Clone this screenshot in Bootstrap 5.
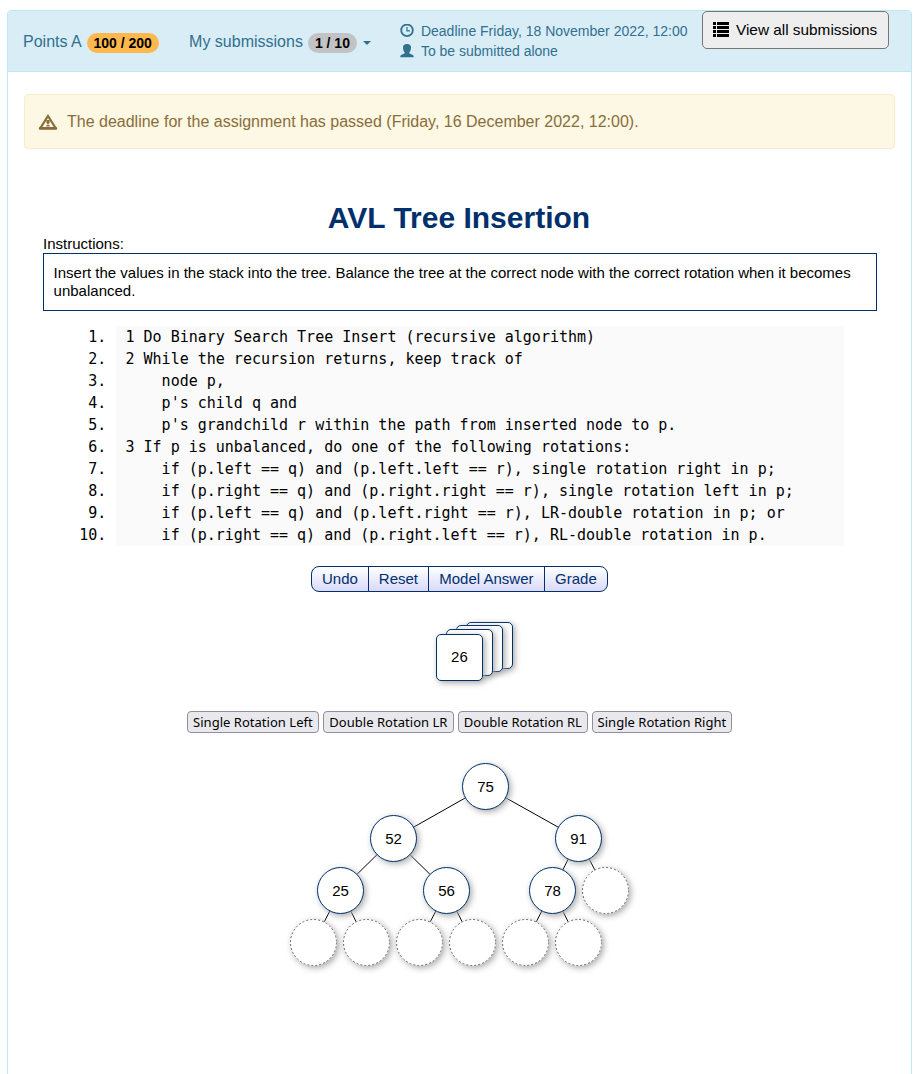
<!DOCTYPE html>
<html lang="en">
<head>
<meta charset="utf-8">
<meta name="viewport" content="width=device-width, initial-scale=1">
<title>AVL Tree Insertion</title>
<link href="https://cdn.jsdelivr.net/npm/bootstrap@5.3.0/dist/css/bootstrap.min.css" rel="stylesheet">
<style>
body { font-family: "Liberation Sans", Arial, sans-serif; font-size: 16px; line-height: 22px; color: #000; overflow: hidden; }
.panel { margin: 10px 7px 0; width: 905px; height: 1100px; border: 1px solid #bce8f1; border-radius: 4px; }
.panel-top { height: 61px; padding: 0 15px; background: #d9edf7; border-bottom: 1px solid #bce8f1; color: #31708f; border-radius: 3px 3px 0 0; }
.pill { flex: none; font-size: 14px; font-weight: 700; line-height: 20px; height: 20px; color: #000; border-radius: 10px; text-align: center; white-space: nowrap; margin: 2px 0 0 5px; }
.pill-points { background: #ffb84d; width: 72px; }
.pill-count { background: #c3c3c5; width: 49px; }
.stat { margin-top: 20px; height: 22px; }
.stat + .stat { margin-left: 30.4px; }
.drop { width: 0; border: 4px solid transparent; border-top-color: #31708f; border-bottom: 0; margin: 2px 0 0 6px; }
.meta { font-size: 14px; line-height: 20px; margin: 10px 0 0 29px; }
.meta svg { width: 14px; height: 14px; margin-right: 7px; }
.view-btn { width: 187px; height: 38px; margin-left: auto; margin-right: 7px; border: 1px solid #767676; border-radius: 5px; background: #eee; font-size: 15.35px; line-height: 36px; color: #000; padding: 0 0 0 10px; }
.view-btn svg { margin: -2px 7px 0 0; }
.notice { margin: 22px 16px 0; height: 55px; border: 1px solid #faebcc; border-radius: 4px; background: #fcf8e3; color: #8a6d3b; padding: 0 14px; }
.notice svg { margin: 0 9px 0 -1px; }
.exercise { margin: 52px 34px 0 35px; font-size: 15px; line-height: 18px; }
.exercise h1 { font-size: 30px; line-height: 34px; font-weight: 700; color: #00306c; margin: 0 2px 0 0; }
.brief { border: 1px solid #00306c; height: 58px; padding: 10px 10px 0 9.6px; }
.code { margin: 15px 33px 0 36px; font: 15px/22px "DejaVu Sans Mono", monospace; }
.code li { display: flex; height: 22px; }
.code .num { width: 27.4px; text-align: right; margin-right: 9.6px; white-space: pre; }
.code .txt { flex: 1; background: #fafafa; white-space: pre; padding-left: 9.5px; }
.applet { margin-right: 2px; }
.tools { margin: 20px auto 0; width: 297px; height: 26px; border: 1px solid #00306c; border-radius: 8px; overflow: hidden; background: linear-gradient(#fff, #d9d9fc); }
.tools button { border: 0; border-right: 1px solid #00306c; background: none; color: #00306c; padding: 0 0 0 .8px; line-height: 24px; height: 24px; }
.tools button:last-child { border-right: 0; }
.w-undo { width: 57px; } .w-reset { width: 60px; } .w-model { width: 116px; } .w-grade { width: 62px; }
.stack { position: relative; width: 47px; height: 59px; margin: 30px auto 0; }
.tile { position: absolute; width: 47px; height: 47px; border: 1px solid #00306c; border-radius: 5px; background: #fff; text-align: center; line-height: 44px; padding-left: .8px; box-shadow: 2px 2px 6px #aaa; }
.rot { margin-top: 30px; gap: 4px; }
.rot button { height: 22px; border: 1px solid #8f8f9d; border-radius: 4px; background: #e9e9ed; font: 13px/20px "Noto Sans", sans-serif; letter-spacing: .03px; color: #000; padding: 0 0 0 .8px; white-space: nowrap; text-align: center; }
.tree { position: relative; width: 340px; height: 204px; margin: 30px auto 0; left: 1px; }
.tree svg { position: absolute; left: 0; top: 0; }
.node { position: absolute; width: 47px; height: 47px; border: 1px solid #00306c; border-radius: 50%; background: #fff; text-align: center; line-height: 45px; box-shadow: 2px 2px 6px #aaa; }
.node.vacant { border-color: transparent; }
</style>
</head>
<body>
<main class="panel">
  <header class="panel-top d-flex align-items-start">
    <div class="stat d-flex">Points A <span class="pill pill-points">100 / 200</span></div>
    <div class="stat d-flex">My submissions <span class="pill pill-count">1 / 10</span><span class="align-self-center"><span class="drop d-block"></span></span></div>
    <div class="meta">
      <div class="d-flex align-items-center"><svg viewBox="0 0 14 14" fill="none" stroke="#31708f"><circle cx="7" cy="6.3" r="5.8" stroke-width="1.8"/><path d="M7 3V6.8H10" stroke-width="1.2"/></svg>Deadline Friday, 18 November 2022, 12:00</div>
      <div class="d-flex align-items-center"><svg viewBox="0 0 14 14" fill="#31708f"><path d="M7 0C9.8 0 11 1.4 11 3.6C11 5.8 10.4 7.3 9.3 8.4V9.3C10 10.2 13.7 10.6 13.7 12.4V13.2H.3V12.4C.3 10.6 4 10.2 4.7 9.3V8.4C3.6 7.3 3 5.8 3 3.6C3 1.4 4.2 0 7 0Z"/></svg>To be submitted alone</div>
    </div>
    <button class="view-btn d-flex align-items-center" type="button"><svg class="flex-shrink-0" width="16" height="15" viewBox="0 0 16 15"><path d="M0 0h3v3H0zM0 4h3v3H0zM0 8h3v3H0zM0 12h3v3H0zM4 0h12v3H4zM4 4h12v3H4zM4 8h12v3H4zM4 12h12v3H4z"/></svg>View all submissions</button>
  </header>
  <div class="notice d-flex align-items-center">
    <svg width="20" height="16" viewBox="0 0 20 16"><path d="M10 2 17.5 14H2.5Z" fill="none" stroke="#8a6d3b" stroke-width="2.2"/><path d="M1.2 13h17.6v2.8H1.2z" fill="#8a6d3b"/><path d="M8.4 6h3.2v2.3l-.8 2H9.2l-.8-2zM8.5 11h3v1.6h-3z" fill="#8a6d3b"/></svg>
    The deadline for the assignment has passed (Friday, 16 December 2022, 12:00).
  </div>
  <section class="exercise">
    <h1 class="text-center">AVL Tree Insertion</h1>
    <div>Instructions:</div>
    <div class="brief">Insert the values in the stack into the tree. Balance the tree at the correct node with the correct rotation when it becomes unbalanced.</div>
    <ol class="code list-unstyled mb-0">
      <li><span class="num">1.</span><span class="txt">1 Do Binary Search Tree Insert (recursive algorithm)</span></li>
      <li><span class="num">2.</span><span class="txt">2 While the recursion returns, keep track of</span></li>
      <li><span class="num">3.</span><span class="txt">    node p,</span></li>
      <li><span class="num">4.</span><span class="txt">    p's child q and</span></li>
      <li><span class="num">5.</span><span class="txt">    p's grandchild r within the path from inserted node to p.</span></li>
      <li><span class="num">6.</span><span class="txt">3 If p is unbalanced, do one of the following rotations:</span></li>
      <li><span class="num">7.</span><span class="txt">    if (p.left == q) and (p.left.left == r), single rotation right in p;</span></li>
      <li><span class="num">8.</span><span class="txt">    if (p.right == q) and (p.right.right == r), single rotation left in p;</span></li>
      <li><span class="num">9.</span><span class="txt">    if (p.left == q) and (p.left.right == r), LR-double rotation in p; or</span></li>
      <li><span class="num">10.</span><span class="txt">    if (p.right == q) and (p.right.left == r), RL-double rotation in p.</span></li>
    </ol>
    <div class="applet">
      <div class="tools d-flex"><button class="w-undo">Undo</button><button class="w-reset">Reset</button><button class="w-model">Model Answer</button><button class="w-grade">Grade</button></div>
      <div class="stack">
        <div class="tile" style="left:30px;top:0"></div>
        <div class="tile" style="left:20px;top:3px"></div>
        <div class="tile" style="left:10px;top:7px"></div>
        <div class="tile" style="left:0;top:12px">26</div>
      </div>
      <div class="rot d-flex justify-content-center">
        <button style="width:132px">Single Rotation Left</button>
        <button style="width:131px">Double Rotation LR</button>
        <button style="width:130px">Double Rotation RL</button>
        <button style="width:140px">Single Rotation Right</button>
      </div>
      <div class="tree">
        <svg width="340" height="204" stroke="#000" stroke-width="1"><path d="M195.5 23.5 103.5 75.5M195.5 23.5 288.5 75.5M103.5 75.5 50.5 127.5M103.5 75.5 156.5 127.5M288.5 75.5 262.5 127.5M288.5 75.5 315.5 127.5M50.5 127.5 23.5 179.5M50.5 127.5 76.5 179.5M156.5 127.5 129.5 179.5M156.5 127.5 182.5 179.5M262.5 127.5 235.5 179.5M262.5 127.5 288.5 179.5"/></svg>
        <div class="node" style="left:172px;top:0">75</div>
        <div class="node" style="left:80px;top:52px">52</div>
        <div class="node" style="left:265px;top:52px">91</div>
        <div class="node" style="left:27px;top:104px">25</div>
        <div class="node" style="left:133px;top:104px">56</div>
        <div class="node" style="left:239px;top:104px">78</div>
        <div class="node vacant" style="left:292px;top:104px"></div>
        <div class="node vacant" style="left:0;top:156px"></div>
        <div class="node vacant" style="left:53px;top:156px"></div>
        <div class="node vacant" style="left:106px;top:156px"></div>
        <div class="node vacant" style="left:159px;top:156px"></div>
        <div class="node vacant" style="left:212px;top:156px"></div>
        <div class="node vacant" style="left:265px;top:156px"></div>
        <svg width="340" height="204" fill="none" stroke="#666" stroke-width="1" stroke-dasharray="2 2.013">
          <circle cx="315.5" cy="127.5" r="23"/><circle cx="23.5" cy="179.5" r="23"/><circle cx="76.5" cy="179.5" r="23"/><circle cx="129.5" cy="179.5" r="23"/><circle cx="182.5" cy="179.5" r="23"/><circle cx="235.5" cy="179.5" r="23"/><circle cx="288.5" cy="179.5" r="23"/>
        </svg>
      </div>
    </div>
  </section>
</main>
<script src="https://cdn.jsdelivr.net/npm/bootstrap@5.3.0/dist/js/bootstrap.bundle.min.js"></script>
</body>
</html>
